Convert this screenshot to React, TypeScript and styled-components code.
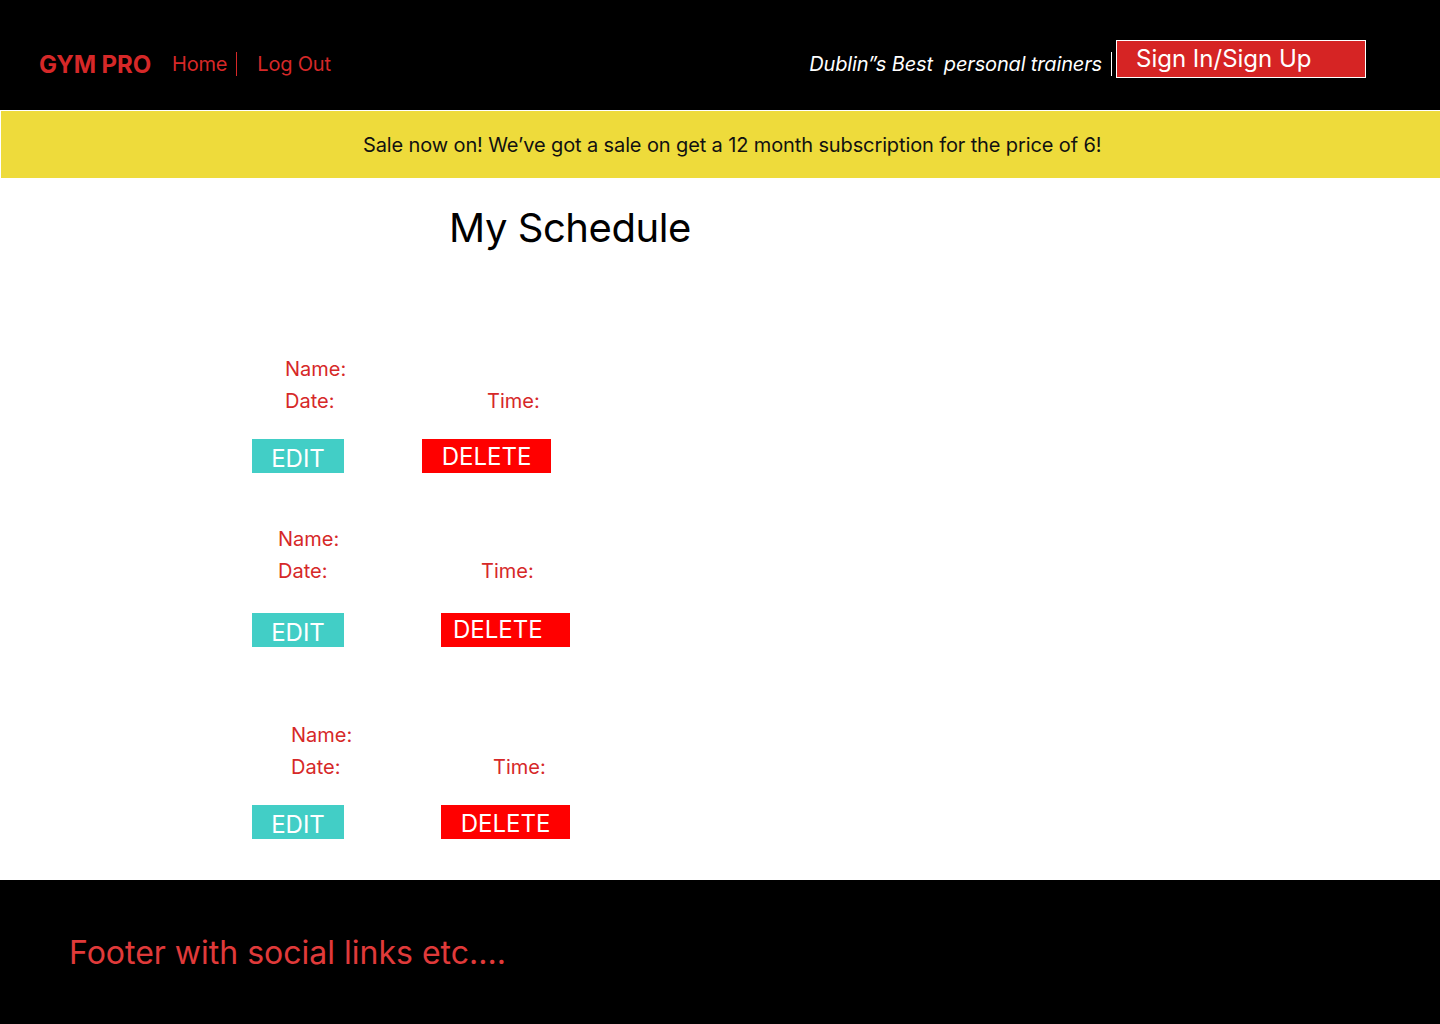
import React from "react";
import styled, { createGlobalStyle } from "styled-components";

const Global = createGlobalStyle`
  html, body { margin: 0; padding: 0; background: #ffffff; }
  body { font-family: Inter, "Noto Sans", "Liberation Sans", sans-serif; font-weight: 400; }
  * { box-sizing: border-box; }
`;

const Page = styled.div`
  width: 1440px;
  min-height: 1024px;
  display: flex;
  flex-direction: column;
`;

const Header = styled.header`
  height: 111px;
  background: #000;
  border-bottom: 1px solid #fff;
  display: flex;
  align-items: center;
  justify-content: space-between;
  padding: 18px 74px 0 39px;
`;

const NavLeft = styled.nav`
  display: flex;
  align-items: center;
`;

const Logo = styled.span`
  font-size: 24px;
  font-weight: 700;
  color: #d62828;
  margin-right: 21px;
  letter-spacing: -0.1px;
`;

const NavLink = styled.a<{ $sep?: boolean }>`
  font-size: 20px;
  color: #d62828;
  text-decoration: none;
  display: flex;
  align-items: center;
  letter-spacing: -0.2px;
  ${(p) => (p.$sep ? "margin-right: 20px;" : "")}
`;

const Sep = styled.span<{ $color: string; $gap: number }>`
  display: inline-block;
  width: 1px;
  height: 24px;
  background: ${(p) => p.$color};
  margin-left: ${(p) => p.$gap}px;
`;

const NavRight = styled.div`
  display: flex;
  align-items: center;
`;

const Tagline = styled.span`
  font-size: 20px;
  font-style: italic;
  color: #fff;
  display: flex;
  align-items: center;
  white-space: pre;
  letter-spacing: -0.15px;
`;

const SignButton = styled.button`
  width: 250px;
  height: 38px;
  margin-left: 4px;
  margin-bottom: 10px;
  background: #d62424;
  border: 1px solid #fff;
  color: #fff;
  font-family: inherit;
  font-size: 24px;
  text-align: left;
  padding: 0 0 2px 19px;
  cursor: pointer;
`;

const Banner = styled.div`
  height: 67px;
  margin-left: 1px;
  background: #eedb3b;
  display: flex;
  align-items: center;
  padding-left: 362px;
  font-size: 20px;
  letter-spacing: -0.12px;
  color: #111;
`;

const Main = styled.main`
  flex: 1;
  display: flex;
  flex-direction: column;
  padding: 26px 0 41px;
`;

const Title = styled.h1`
  margin: 0 0 101px 449px;
  font-size: 40px;
  font-weight: 400;
  line-height: 48px;
  letter-spacing: -0.45px;
  color: #000;
`;

const Card = styled.section<{ $gapBefore: number }>`
  display: flex;
  flex-direction: column;
  margin-top: ${(p) => p.$gapBefore}px;
`;

const Row = styled.div<{ $indent: number }>`
  display: flex;
  padding-left: ${(p) => p.$indent}px;
  height: 32px;
  line-height: 32px;
`;

const Label = styled.span<{ $width?: number }>`
  font-size: 20px;
  color: #d62828;
  ${(p) => (p.$width ? `width: ${p.$width}px;` : "")}
`;

const Actions = styled.div<{ $gap: number; $top: number }>`
  display: flex;
  padding-left: 252px;
  margin-top: ${(p) => p.$top}px;
  gap: ${(p) => p.$gap}px;
`;

const ActionButton = styled.button<{ $bg: string; $w: number; $pad?: number; $shift: number }>`
  width: ${(p) => p.$w}px;
  height: 34px;
  background: ${(p) => p.$bg};
  border: none;
  color: #fff;
  font-family: inherit;
  font-size: 24px;
  line-height: 30px;
  padding: ${(p) => 2 + p.$shift}px 0 0 ${(p) => (p.$pad !== undefined ? p.$pad : 0)}px;
  display: flex;
  align-items: flex-start;
  justify-content: ${(p) => (p.$pad !== undefined ? "flex-start" : "center")};
  cursor: pointer;
`;

const Footer = styled.footer`
  height: 144px;
  background: #000;
  display: flex;
  align-items: center;
  padding-left: 69px;
  font-size: 32px;
  color: #e03a3a;
`;

type Entry = {
  gapBefore: number;
  indent: number;
  timeOffset: number;
  btnTop: number;
  deleteGap: number;
  deletePad?: number;
  deleteShift: number;
};

const entries: Entry[] = [
  { gapBefore: 0, indent: 285, timeOffset: 202, btnTop: 22, deleteGap: 78, deleteShift: 1 },
  { gapBefore: 50, indent: 278, timeOffset: 203, btnTop: 26, deleteGap: 97, deletePad: 12, deleteShift: 0 },
  { gapBefore: 72, indent: 291, timeOffset: 202, btnTop: 22, deleteGap: 97, deleteShift: 2 },
];

export default function App() {
  return (
    <>
      <Global />
      <Page>
        <Header>
          <NavLeft>
            <Logo>GYM PRO</Logo>
            <NavLink href="#" $sep>
              Home
              <Sep $color="#d62828" $gap={9} />
            </NavLink>
            <NavLink href="#">Log Out</NavLink>
          </NavLeft>
          <NavRight>
            <Tagline>
              Dublin”s Best  personal trainers
              <Sep $color="#fff" $gap={9} />
            </Tagline>
            <SignButton>Sign In/Sign Up</SignButton>
          </NavRight>
        </Header>
        <Banner>Sale now on! We’ve got a sale on get a 12 month subscription for the price of 6!</Banner>
        <Main>
          <Title>My Schedule</Title>
          {entries.map((e, i) => (
            <Card key={i} $gapBefore={e.gapBefore}>
              <Row $indent={e.indent}>
                <Label>Name:</Label>
              </Row>
              <Row $indent={e.indent}>
                <Label $width={e.timeOffset}>Date:</Label>
                <Label>Time:</Label>
              </Row>
              <Actions $gap={e.deleteGap} $top={e.btnTop}>
                <ActionButton $bg="#42cec6" $w={92} $shift={3}>
                  EDIT
                </ActionButton>
                <ActionButton $bg="#ff0000" $w={129} $pad={e.deletePad} $shift={e.deleteShift}>
                  DELETE
                </ActionButton>
              </Actions>
            </Card>
          ))}
        </Main>
        <Footer>Footer with social links etc....</Footer>
      </Page>
    </>
  );
}
